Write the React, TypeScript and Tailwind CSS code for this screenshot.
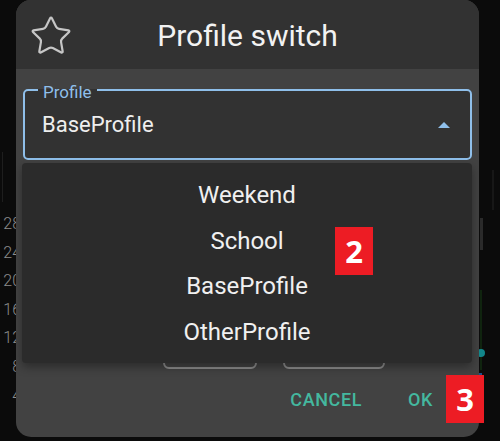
import React from "react";
import { Star } from "lucide-react";

const axis = ["28", "24", "20", "16", "12", "8", "4"];
const profiles = ["Weekend", "School", "BaseProfile", "OtherProfile"];

function RightStrip() {
  // faint bits of the chart behind the dialog
  return (
    <svg width="21" height="437" viewBox="0 0 21 437" className="block">
      <rect x="13.5" y="170" width="1" height="40" fill="#242424" />
      <rect x="1" y="218" width="3" height="32" fill="#2a2a2a" />
      <rect x="1" y="290" width="2" height="80" fill="#10240f" />
      <circle cx="2" cy="353" r="4" fill="#12868a" />
      <rect x="0" y="373" width="3" height="10" fill="#1b4f8c" />
    </svg>
  );
}

export default function App() {
  return (
    <div
      className="relative w-[500px] h-[441px] overflow-hidden bg-[#0b0b0b]"
      style={{ fontFamily: "Roboto, 'Noto Sans', sans-serif" }}
    >
      <div className="flex h-[437px]">
        {/* chart y-axis behind the dialog */}
        <div className="relative w-[16px] overflow-hidden">
          <div className="w-[1px] h-[50px] mt-[152px] ml-[2px] bg-[#1e1e1e]" />
          <div className="w-[21px] flex flex-col mt-[8px] text-right text-[16px] leading-[28.6px] font-light text-[#8c8c8c]">
            {axis.map((n) => (
              <span key={n}>{n}</span>
            ))}
          </div>
        </div>

        {/* dialog */}
        <div className="relative w-[463px] h-[437px] flex flex-col rounded-[15px] overflow-hidden bg-[#424242]">
          <div className="grid grid-cols-[1fr_auto_1fr] items-center h-[69px] bg-[#323232]">
            <div className="pl-[13px] pt-[2px]">
              <Star size={44} strokeWidth={1.2} color="#c6c6c6" />
            </div>
            <h1 className="text-[30px] leading-[30px] pt-[3px] text-[#f2f2f2]">Profile switch</h1>
            <div />
          </div>

          <div className="px-[7px] mt-[12px]">
            <fieldset className="h-[79px] rounded-[5px] border-2 border-[#8fbfea] bg-[#323232]">
              <legend className="ml-[13px] px-[5px] text-[17px] leading-[18px] text-[#8fbfea]">
                <span className="relative top-[2px]">Profile</span>
              </legend>
              <div className="flex items-center justify-between pt-[13px] pl-[17px] pr-[20px]">
                <span className="text-[22px] leading-[26px] text-[#eeeeee]">BaseProfile</span>
                <span className="w-0 h-0 border-x-[6px] border-x-transparent border-b-[6px] border-b-[#8fbfea]" />
              </div>
            </fieldset>
          </div>

          <div className="flex gap-[26px] pl-[147px] mt-[169px]">
            <div className="w-[94px] h-[40px] rounded-[6px] border-2 border-[#8a8a8a]" />
            <div className="w-[102px] h-[40px] rounded-[6px] border-2 border-[#8a8a8a]" />
          </div>

          <div className="flex justify-end items-center gap-[30px] pr-[38px] mt-[12px]">
            <button className="px-[8px] py-[8px] text-[18px] leading-[22px] font-medium tracking-[0.6px] text-[#44b89f]">
              CANCEL
            </button>
            <button className="px-[8px] py-[8px] text-[18px] leading-[22px] font-medium tracking-[0.6px] text-[#44b89f]">
              OK
            </button>
          </div>

          {/* open dropdown menu */}
          <div className="absolute left-[6px] top-[163px] w-[450px] h-[200px] pt-[10px] rounded-[4px] bg-[#2b2b2b] shadow-[0_4px_10px_rgba(0,0,0,0.35)] flex flex-col items-center">
            {profiles.map((p) => (
              <div key={p} className="text-[24px] leading-[45.5px] text-[#f0f0f0]">
                {p}
              </div>
            ))}
          </div>
        </div>

        <RightStrip />
      </div>

      {/* annotation badges */}
      <div
        className="absolute left-[335px] top-[227px] w-[38px] h-[48px] flex items-center justify-center bg-[#ed1c24] text-white text-[31px] font-bold"
        style={{ fontFamily: "'Open Sans', 'Liberation Sans', sans-serif" }}
      >
        2
      </div>
      <div
        className="absolute left-[446px] top-[375px] w-[38px] h-[48px] flex items-center justify-center bg-[#ed1c24] text-white text-[31px] font-bold"
        style={{ fontFamily: "'Open Sans', 'Liberation Sans', sans-serif" }}
      >
        3
      </div>
    </div>
  );
}
